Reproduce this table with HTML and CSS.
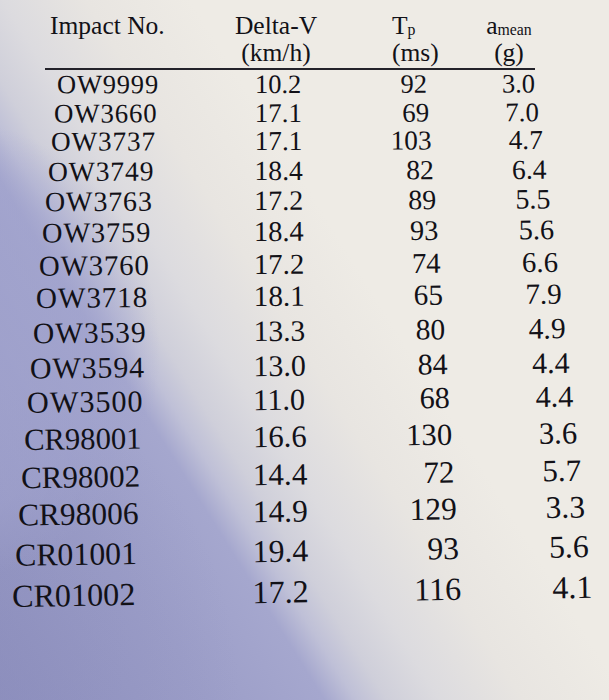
FILE: index.html
```html
<!DOCTYPE html>
<html lang="en">
<head>
<meta charset="utf-8">
<title>Impact table</title>
<link rel="stylesheet" href="styles.css">
</head>
<body>
<div class="page">
  <div class="head">
    <div class="hrow">
      <span class="hc hc1">Impact No.</span>
      <span class="hc hc2">Delta-V</span>
      <span class="hc hc3">T<sub class="sub">p</sub></span>
      <span class="hc hc4">a<sub class="sub">mean</sub></span>
    </div>
    <div class="hrow">
      <span class="hc hc1"></span>
      <span class="hc hc2">(km/h)</span>
      <span class="hc hc3">(ms)</span>
      <span class="hc hc4">(g)</span>
    </div>
  </div>
  <div class="rule"></div>
  <div class="rows">
    <div class="row"><span class="id ow">OW9999</span><span class="dv">10.2</span><span class="tp">92</span><span class="am">3.0</span></div>
    <div class="row"><span class="id ow">OW3660</span><span class="dv">17.1</span><span class="tp">69</span><span class="am">7.0</span></div>
    <div class="row"><span class="id ow">OW3737</span><span class="dv">17.1</span><span class="tp">103</span><span class="am">4.7</span></div>
    <div class="row"><span class="id ow">OW3749</span><span class="dv">18.4</span><span class="tp">82</span><span class="am">6.4</span></div>
    <div class="row"><span class="id ow">OW3763</span><span class="dv">17.2</span><span class="tp">89</span><span class="am">5.5</span></div>
    <div class="row"><span class="id ow">OW3759</span><span class="dv">18.4</span><span class="tp">93</span><span class="am">5.6</span></div>
    <div class="row"><span class="id ow">OW3760</span><span class="dv">17.2</span><span class="tp">74</span><span class="am">6.6</span></div>
    <div class="row"><span class="id ow">OW3718</span><span class="dv">18.1</span><span class="tp">65</span><span class="am">7.9</span></div>
    <div class="row"><span class="id ow">OW3539</span><span class="dv">13.3</span><span class="tp">80</span><span class="am">4.9</span></div>
    <div class="row"><span class="id ow">OW3594</span><span class="dv">13.0</span><span class="tp">84</span><span class="am">4.4</span></div>
    <div class="row"><span class="id ow">OW3500</span><span class="dv">11.0</span><span class="tp">68</span><span class="am">4.4</span></div>
    <div class="row"><span class="id cr">CR98001</span><span class="dv">16.6</span><span class="tp">130</span><span class="am">3.6</span></div>
    <div class="row"><span class="id cr">CR98002</span><span class="dv">14.4</span><span class="tp">72</span><span class="am">5.7</span></div>
    <div class="row"><span class="id cr">CR98006</span><span class="dv">14.9</span><span class="tp">129</span><span class="am">3.3</span></div>
    <div class="row"><span class="id cr">CR01001</span><span class="dv">19.4</span><span class="tp">93</span><span class="am">5.6</span></div>
    <div class="row"><span class="id cr">CR01002</span><span class="dv">17.2</span><span class="tp">116</span><span class="am">4.1</span></div>
  </div>
</div>
</body>
</html>
```

FILE: styles.css
```css
html, body {
  margin: 0;
  padding: 0;
}

.page {
  width: 609px;
  height: 700px;
  overflow: hidden;
  box-sizing: border-box;
  padding-top: 13px;
  color: #121117;
  font-family: "Liberation Serif", "Times New Roman", serif;
  background:
    radial-gradient(ellipse 210px 230px at -50px 350px, rgba(160, 162, 205, 0.75) 0%, rgba(160, 162, 205, 0.55) 70%, rgba(160, 162, 205, 0) 100%),
    radial-gradient(ellipse 260px 320px at -20px 700px, rgba(136, 138, 186, 0.45) 0%, rgba(136, 138, 186, 0) 100%),
    linear-gradient(58deg, #9092bf 0%, #9c9ec8 20%, #a5a7ce 31%, #bfc0d7 34%, #cfcfda 37%, #dcdbdf 42%, #e8e5e1 50%, #eeebe5 60%, #eeebe5 100%);
}

/* header */
.head {
  margin-left: 45px;
  font-size: 25.5px;
}

.hrow {
  display: grid;
  grid-template-columns: 171px 120px 130px 86px;
  height: 26.5px;
  line-height: 26.5px;
  white-space: nowrap;
}

.hc1 {
  padding-left: 5px;
}

.hc2 {
  text-align: center;
}

.hc3 {
  padding-left: 56px;
}

.hc4 {
  text-align: center;
}

.sub {
  font-size: 0.62em;
  vertical-align: -0.04em;
  line-height: 0;
}

.rule {
  margin: 2px 0 1px 45px;
  width: 490px;
  height: 2px;
  background: #23222a;
}

/* body rows: scale grows row by row to follow the photo's perspective */
.row {
  --f: 26.5px;
  --h: 27.5px;
  --r: -0.1deg;
  display: grid;
  grid-template-columns: 7.47em 3.91em 2.58em 4.08em;
  font-size: var(--f);
  height: var(--h);
  line-height: var(--h);
  margin-left: calc(265.8px - 7.88em);
  white-space: nowrap;
  transform: rotate(var(--r));
  transform-origin: 7.88em 50%;
}

.row:nth-child(2)  { --f: 26.88px; --h: 28.3px; --r: -0.15deg; }
.row:nth-child(3)  { --f: 27.26px; --h: 29.1px; --r: -0.21deg; }
.row:nth-child(4)  { --f: 27.64px; --h: 29.9px; --r: -0.26deg; }
.row:nth-child(5)  { --f: 28.02px; --h: 30.7px; --r: -0.32deg; }
.row:nth-child(6)  { --f: 28.39px; --h: 31.6px; --r: -0.37deg; }
.row:nth-child(7)  { --f: 28.77px; --h: 32.4px; --r: -0.43deg; }
.row:nth-child(8)  { --f: 29.15px; --h: 33.3px; --r: -0.48deg; }
.row:nth-child(9)  { --f: 29.53px; --h: 34.2px; --r: -0.54deg; }
.row:nth-child(10) { --f: 29.91px; --h: 35.0px; --r: -0.59deg; }
.row:nth-child(11) { --f: 30.29px; --h: 35.9px; --r: -0.65deg; }
.row:nth-child(12) { --f: 30.67px; --h: 36.8px; --r: -0.70deg; }
.row:nth-child(13) { --f: 31.05px; --h: 37.7px; --r: -0.76deg; }
.row:nth-child(14) { --f: 31.43px; --h: 38.7px; --r: -0.81deg; }
.row:nth-child(15) { --f: 31.81px; --h: 39.6px; --r: -0.87deg; }
.row:nth-child(16) { --f: 32.18px; --h: 40.6px; --r: -0.92deg; }

.ow {
  letter-spacing: 0.03em;
}

.tp,
.am {
  text-align: right;
}
```
